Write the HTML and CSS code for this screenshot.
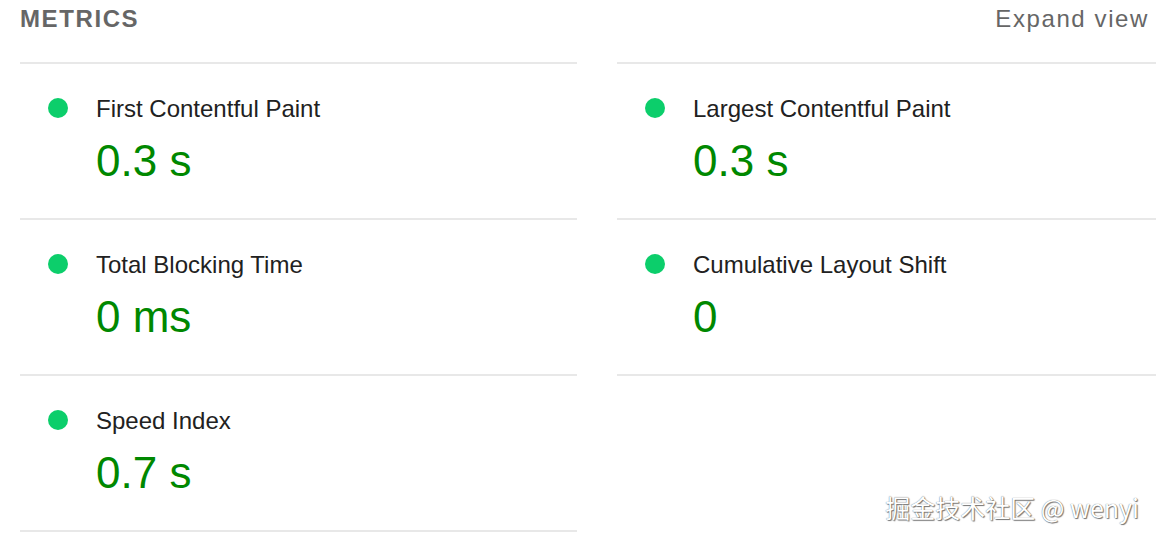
FILE: index.html
```html
<!DOCTYPE html>
<html>
<head>
<meta charset="utf-8">
<link rel="stylesheet" href="styles.css">
</head>
<body>
<div class="page">
  <div class="header">
    <div class="heading">METRICS</div>
    <div class="toggle">Expand view</div>
  </div>
  <div class="grid">
    <div class="metric first">
      <span class="dot"></span>
      <div class="body">
        <div class="title">First Contentful Paint</div>
        <div class="value">0.3 s</div>
      </div>
    </div>
    <div class="metric first">
      <span class="dot"></span>
      <div class="body">
        <div class="title">Largest Contentful Paint</div>
        <div class="value">0.3 s</div>
      </div>
    </div>
    <div class="metric">
      <span class="dot"></span>
      <div class="body">
        <div class="title">Total Blocking Time</div>
        <div class="value">0 ms</div>
      </div>
    </div>
    <div class="metric">
      <span class="dot"></span>
      <div class="body">
        <div class="title">Cumulative Layout Shift</div>
        <div class="value">0</div>
      </div>
    </div>
    <div class="metric">
      <span class="dot"></span>
      <div class="body">
        <div class="title">Speed Index</div>
        <div class="value">0.7 s</div>
      </div>
    </div>
  </div>
  <div class="watermark">掘金技术社区 @ wenyi</div>
</div>
</body>
</html>
```

FILE: styles.css
```css
html, body {
  margin: 0;
  padding: 0;
  background: #ffffff;
  overflow: hidden;
}
body {
  width: 1156px;
  height: 540px;
  font-family: "Liberation Sans", Arial, sans-serif;
}
.page {
  position: relative;
  height: 540px;
  padding-left: 20px;
}
.header {
  display: flex;
  justify-content: space-between;
  align-items: flex-start;
  height: 62px;
  box-sizing: border-box;
  padding-top: 4px;
  padding-right: 7px;
  font-size: 24px;
  line-height: 30px;
  color: #666666;
}
.heading {
  font-weight: bold;
  letter-spacing: 1.6px;
}
.toggle {
  letter-spacing: 1.6px;
}
.grid {
  display: grid;
  grid-template-columns: 557px 557px;
  column-gap: 40px;
  align-items: start;
}
.metric {
  display: flex;
  align-items: flex-start;
  height: 156px;
  box-sizing: border-box;
  padding-top: 30px;
  padding-left: 28px;
  border-bottom: 2px solid #e8e8e8;
}
.metric.first {
  height: 158px;
  border-top: 2px solid #e8e8e8;
}
.dot {
  flex: none;
  width: 20px;
  height: 20px;
  border-radius: 50%;
  background: #0cce6b;
  margin-top: 4px;
  margin-right: 28px;
}
.title {
  font-size: 24px;
  line-height: 30px;
  color: #212121;
}
.value {
  font-size: 44px;
  line-height: 50px;
  margin-top: 12px;
  color: #008800;
}
.watermark {
  position: absolute;
  right: 17px;
  bottom: 18px;
  font-family: "Noto Sans CJK SC", "Liberation Sans", sans-serif;
  font-size: 25px;
  line-height: 30px;
  color: #ffffff;
  text-shadow: 0 0 1px #555, 1px 1px 1px #777;
}
```
